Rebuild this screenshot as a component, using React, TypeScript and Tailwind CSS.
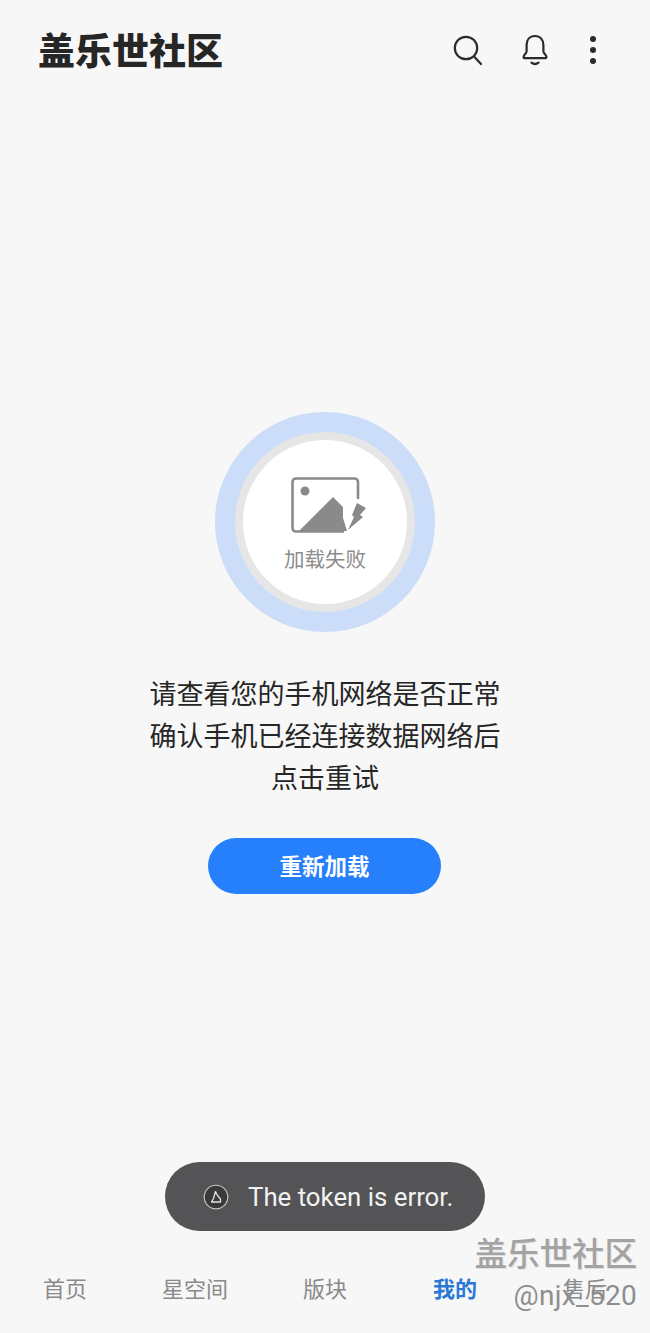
import React from "react";

const cjk = "font-['Noto_Sans_CJK_SC','Noto_Sans',sans-serif]";

const tabs = ["首页", "星空间", "版块", "我的", "售后"];

function SearchIcon() {
  return (
    <svg width="32" height="32" viewBox="0 0 32 32" fill="none" stroke="#2b2b2b" strokeWidth="2.2" strokeLinecap="round">
      <circle cx="14" cy="14" r="11.2" />
      <path d="M22.5 23l6.5 7" />
    </svg>
  );
}

function BellIcon() {
  return (
    <svg width="28" height="32" viewBox="0 0 28 32" fill="none" stroke="#2b2b2b" strokeWidth="2.2" strokeLinecap="round" strokeLinejoin="round">
      <path d="M14 2c-5.6 0-8.4 4-8.4 9v6.5c0 2-3 3.2-3 5.4 0 .9.6 1.3 1.5 1.3h19.8c.9 0 1.5-.4 1.5-1.3 0-2.2-3-3.4-3-5.4V11c0-5-2.8-9-8.4-9z" />
      <path d="M10.5 28.6c2 1.6 5 1.6 7 0" />
    </svg>
  );
}

function BrokenImage() {
  return (
    <svg width="76" height="56" viewBox="0 0 76 56" fill="none">
      <path d="M67 21V5c0-2-1.500-3.500-3.500-3.500H5C3 1.500 1.500 3 1.500 5v46c0 2 1.500 3.500 3.500 3.500h47" stroke="#8a8a8a" strokeWidth="2.600" strokeLinecap="round" />
      <circle cx="14" cy="14" r="4.500" fill="#8a8a8a" />
      <path d="M8 54L42 20l10 10v11l4 13z" fill="#8a8a8a" />
      <path d="M66 26l9 5-6 7 3 2-15 13 6-13-2-2z" fill="#8a8a8a" />
    </svg>
  );
}

function ToastIcon() {
  return (
    <svg width="26" height="26" viewBox="0 0 26 26" fill="none">
      <circle cx="13" cy="13" r="11.800" fill="#3a3a3a" stroke="#c8c8c8" strokeWidth="1.100" />
      <path d="M12.500 7.500l2 4 3 3.500v3H8.500l2-3.500z" stroke="#e4e4e4" strokeWidth="1.300" strokeLinejoin="round" />
    </svg>
  );
}

export default function App() {
  return (
    <div className={`relative flex flex-col h-[1333px] w-[650px] overflow-hidden bg-[#f7f7f7] ${cjk}`}>
      <header className="flex items-center justify-between h-[100px] pl-[38px] pr-[55px] pb-[2px]">
        <h1 className="text-[37px] leading-none font-black text-[#262626]">盖乐世社区</h1>
        <div className="flex items-center mt-[2px] mr-[-1px]">
          <SearchIcon />
          <div className="ml-[37px]">
            <BellIcon />
          </div>
          <div className="ml-[41px] flex flex-col gap-[5px]">
            <span className="w-[6px] h-[6px] rounded-full bg-[#2b2b2b]" />
            <span className="w-[6px] h-[6px] rounded-full bg-[#2b2b2b]" />
            <span className="w-[6px] h-[6px] rounded-full bg-[#2b2b2b]" />
          </div>
        </div>
      </header>

      <main className="flex flex-col items-center flex-1 pt-[312px]">
        <div className="w-[220px] h-[220px] rounded-full bg-[#cbddf8] p-[20px]">
          <div className="w-full h-full rounded-full bg-[#e6e6e6] p-[8px]">
            <div className="flex flex-col items-center w-full h-full rounded-full bg-white pt-[37px]">
              <div className="ml-[7px]">
                <BrokenImage />
              </div>
              <span className="mt-[10px] text-[20.500px] leading-[30px] text-[#8c8c8c]">加载失败</span>
            </div>
          </div>
        </div>

        <div className="mt-[40px] text-center text-[27px] leading-[42px] text-[#262626]">
          <p>请查看您的手机网络是否正常</p>
          <p>确认手机已经连接数据网络后</p>
          <p>点击重试</p>
        </div>

        <button className="mt-[40px] mr-[1px] w-[233px] h-[56px] rounded-full bg-[#2680fb] text-[22.500px] font-bold text-white">
          重新加载
        </button>
      </main>

      <nav className="grid grid-cols-5 h-[88px] pt-[26px] text-[22px] leading-[32px] text-center text-[#8a8a8a]">
        {tabs.map((t) => (
          <span key={t} className={t === "我的" ? "font-bold text-[#2a78d6]" : ""}>
            {t}
          </span>
        ))}
      </nav>

      <div className="absolute left-[165px] top-[1162px] flex items-center w-[320px] h-[69px] rounded-full bg-[#545456] pl-[38px]">
        <ToastIcon />
        <span className="ml-[19px] mt-[2px] font-['Roboto',sans-serif] text-[25.800px] text-[#f2f2f2]">The token is error.</span>
      </div>

      <div className="absolute right-[13px] top-[1231px] flex flex-col items-end text-[#a3a3a3]">
        <span className="text-[32.500px] leading-[42px] font-medium [text-shadow:1px_1px_0_#e0e0e0]">盖乐世社区</span>
        <span className="font-['Roboto',sans-serif] text-[28px] leading-[40px] tracking-[0.3px] mt-[3px] text-[#8e8e8e]">@njx_520</span>
      </div>
    </div>
  );
}
